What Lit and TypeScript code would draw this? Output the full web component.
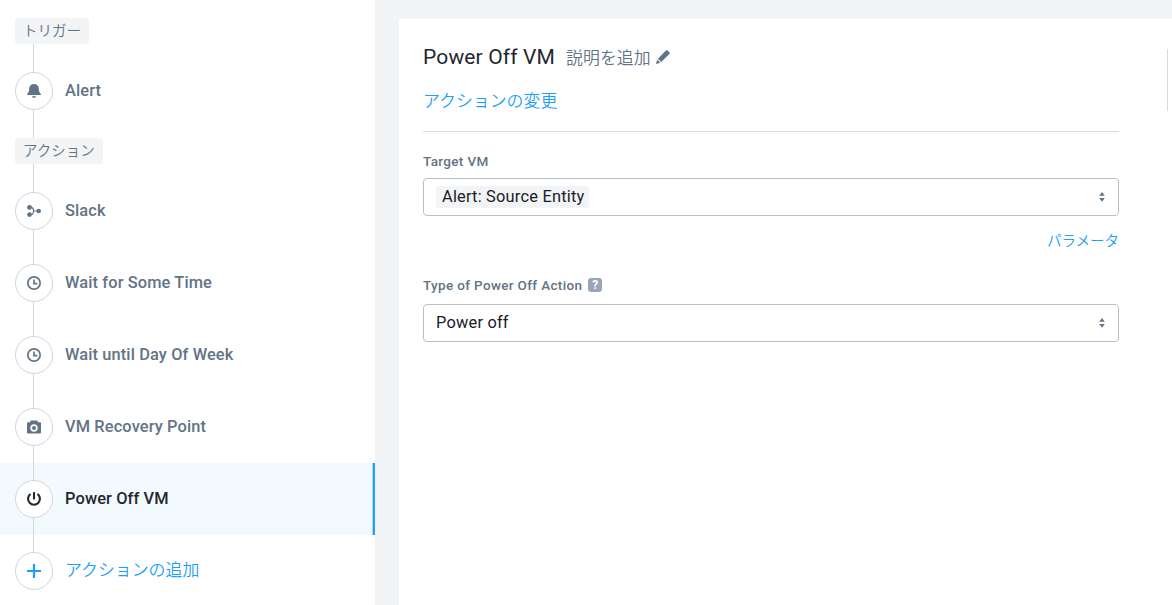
import { LitElement, html, css, svg, nothing } from "lit";
import { customElement, property } from "lit/decorators.js";

const icons: Record<string, unknown> = {
  bell: svg`<path d="M7 0C4.2 0 2.3 1.9 2.2 4.6C2.1 7.2 1.8 8.3 .6 9.6Q0 10.2 0 11H14Q14 10.2 13.4 9.6C12.2 8.3 11.9 7.2 11.8 4.6C11.7 1.9 9.8 0 7 0ZM4.8 12.2H9.2Q8.6 14 7 14T4.8 12.2Z"/>`,
  flow: svg`<g fill="none" stroke="currentColor" stroke-width="1.1"><path d="M2.5 3.4H4.6Q6.4 3.8 6.6 7Q6.4 10.2 4.6 10.6H2.5M6.6 7H11"/></g><circle cx="2.5" cy="3.4" r="2.4"/><circle cx="2.5" cy="10.6" r="2.4"/><circle cx="11.7" cy="7" r="2.3"/>`,
  clock: svg`<g fill="none" stroke="currentColor" stroke-width="1.7"><circle cx="7" cy="7" r="6.15"/><path d="M7 3.4V7.6H10.4"/></g>`,
  camera: svg`<path fill-rule="evenodd" d="M3.2 1.2L4 .4H10L10.8 1.2V2.2H13Q14 2.2 14 3.2V12.4Q14 13.4 13 13.4H1Q0 13.4 0 12.4V3.2Q0 2.2 1 2.2H3.2ZM7 4.3A3.7 3.7 0 1 0 7 11.7A3.7 3.7 0 1 0 7 4.3ZM7 6A2 2 0 1 1 7 10A2 2 0 1 1 7 6Z"/>`,
  power: svg`<g fill="none" stroke="currentColor" stroke-width="2.1" stroke-linecap="round"><path d="M7 1V6.6"/><path d="M2.9 2.6A5.9 5.9 0 1 0 11.1 2.6"/></g>`,
  plus: svg`<path d="M5.9 0H8.1V5.9H14V8.1H8.1V14H5.9V8.1H0V5.9H5.9Z"/>`,
  pencil: svg`<path d="M9.9.6Q10.8-.3 11.7.6L13.4 2.3Q14.3 3.2 13.4 4.1L5.2 12L2 8.8ZM1.2 9.5L4.4 12.7L0 14Z"/>`,
};

const icon = (name: string) =>
  html`<svg width="14" height="14" viewBox="0 0 14 14" fill="currentColor">${icons[name]}</svg>`;

@customElement("flow-step")
class FlowStep extends LitElement {
  @property() icon = "";
  @property() label = "";
  @property({ reflect: true }) kind = "";
  static styles = css`
    :host {
      display: flex;
      align-items: center;
      gap: 12px;
      height: 72px;
      box-sizing: border-box;
      padding-left: 15px;
      color: #627386;
      background: linear-gradient(#d3d6dd, #d3d6dd) 33px 0 / 1px 100% no-repeat;
    }
    :host([kind="active"]) {
      color: #22272e;
      background-color: #f3fafe;
      border-right: 2px solid #1f9ffb;
      box-shadow: inset -1px 0 #a4d9fb;
    }
    :host([kind="add"]) {
      color: #1f9ffb;
      background-size: 1px 50%;
    }
    .dot {
      display: grid;
      place-items: center;
      width: 38px;
      height: 38px;
      box-sizing: border-box;
      border: 1px solid #d3d6dd;
      border-radius: 50%;
      background: #fff;
    }
    .label {
      font: 500 16.4px/24px Roboto, "Noto Sans CJK JP", sans-serif;
      letter-spacing: 0.12px;
    }
    :host([kind="add"]) .label {
      font: 350 16.9px/24px "Noto Sans CJK JP", sans-serif;
      letter-spacing: 0;
      padding-bottom: 4px;
    }
  `;
  render() {
    return html`<span class="dot">${icon(this.icon)}</span><span class="label">${this.label}</span>`;
  }
}

@customElement("select-field")
class SelectField extends LitElement {
  @property() label = "";
  @property() value = "";
  @property({ type: Boolean }) chip = false;
  @property({ type: Boolean, reflect: true }) help = false;
  static styles = css`
    :host {
      display: block;
      font-family: Roboto, sans-serif;
    }
    .caption {
      display: flex;
      align-items: center;
      gap: 6px;
      height: 20px;
      font-size: 13.5px;
      font-weight: 500;
      letter-spacing: 0.34px;
      color: #627386;
    }
    .help {
      width: 14px;
      height: 14px;
      border-radius: 3px;
      background: #9aa5b5;
      color: #fff;
      font: 700 12px/14px Roboto, sans-serif;
      letter-spacing: 0;
      text-align: center;
    }
    .box {
      display: flex;
      align-items: center;
      justify-content: space-between;
      box-sizing: border-box;
      height: 38px;
      margin-top: 7px;
      padding: 0 13px 0 12px;
      border: 1px solid #b8bfca;
      border-radius: 4px;
      color: #22272e;
    }
    :host([help]) .box {
      margin-top: 9px;
    }
    .value {
      font-size: 16.4px;
      line-height: 22px;
      letter-spacing: 0.2px;
      color: #1b2027;
    }
    .chip {
      padding: 0 5px 0 6px;
      border-radius: 3px;
      background: #f2f4f6;
    }
    .arrows {
      color: #627386;
    }
  `;
  render() {
    return html`
      <div class="caption"><span>${this.label}</span>${this.help ? html`<span class="help">?</span>` : nothing}</div>
      <div class="box">
        <span class="value ${this.chip ? "chip" : ""}">${this.value}</span>
        <svg class="arrows" width="6" height="10" viewBox="0 0 6 10" fill="currentColor">
          <path d="M3 0L5.8 3.8H.2ZM3 9.8L.2 6H5.8Z" />
        </svg>
      </div>
    `;
  }
}

@customElement("app-root")
class AppRoot extends LitElement {
  static styles = css`
    :host {
      display: flex;
      height: 605px;
      overflow: hidden;
      background: #f2f4f6;
      font-family: Roboto, "Noto Sans CJK JP", sans-serif;
    }
    .sidebar {
      width: 375px;
      flex: none;
      box-sizing: border-box;
      padding-top: 18px;
      background: #fff;
    }
    .group {
      padding: 0 0 11px 15px;
      background: linear-gradient(#d3d6dd, #d3d6dd) 33px 0 / 1px 100% no-repeat;
    }
    .group.next {
      padding-top: 11px;
    }
    .tag {
      display: block;
      width: fit-content;
      height: 26px;
      padding: 0 8px;
      border-radius: 3px;
      background: #f2f4f6;
      color: #627386;
      font: 350 14.5px/24px "Noto Sans CJK JP", sans-serif;
    }
    .panel {
      flex: 1;
      display: flex;
      justify-content: space-between;
      margin: 19px 0 0 24px;
      padding: 0 4px 0 24px;
      background: #fff;
    }
    .content {
      width: 696px;
    }
    .head {
      box-sizing: border-box;
      height: 113px;
      padding-top: 24px;
      border-bottom: 1px solid #d9dade;
    }
    .title {
      display: flex;
      align-items: center;
      height: 28px;
    }
    .name {
      font-size: 21px;
      line-height: 28px;
      letter-spacing: 0.15px;
      color: #22272e;
    }
    .desc {
      margin: 0 5px 0 11px;
      font: 350 16.9px/28px "Noto Sans CJK JP", sans-serif;
      color: #627386;
    }
    .edit {
      display: flex;
      color: #627386;
    }
    .link {
      color: #1f9ffb;
      font: 350 16.9px/24px "Noto Sans CJK JP", sans-serif;
    }
    .change {
      margin-top: 17px;
    }
    .first {
      margin-top: 19px;
    }
    .params {
      margin: 13px 0 24px;
      font-size: 14.5px;
      line-height: 22px;
      text-align: right;
    }
    .edge {
      width: 1px;
      height: 62px;
      margin-top: 30px;
      background: #d9dade;
    }
  `;
  render() {
    return html`
      <nav class="sidebar">
        <div class="group"><span class="tag">トリガー</span></div>
        <flow-step icon="bell" label="Alert"></flow-step>
        <div class="group next"><span class="tag">アクション</span></div>
        <flow-step icon="flow" label="Slack"></flow-step>
        <flow-step icon="clock" label="Wait for Some Time"></flow-step>
        <flow-step icon="clock" label="Wait until Day Of Week"></flow-step>
        <flow-step icon="camera" label="VM Recovery Point"></flow-step>
        <flow-step icon="power" label="Power Off VM" kind="active"></flow-step>
        <flow-step icon="plus" label="アクションの追加" kind="add"></flow-step>
      </nav>
      <main class="panel">
        <div class="content">
          <div class="head">
            <div class="title">
              <span class="name">Power Off VM</span>
              <span class="desc">説明を追加</span>
              <span class="edit">${icon("pencil")}</span>
            </div>
            <div class="link change">アクションの変更</div>
          </div>
          <select-field class="first" label="Target VM" value="Alert: Source Entity" chip></select-field>
          <div class="link params">パラメータ</div>
          <select-field label="Type of Power Off Action" value="Power off" help></select-field>
        </div>
        <div class="edge"></div>
      </main>
    `;
  }
}
